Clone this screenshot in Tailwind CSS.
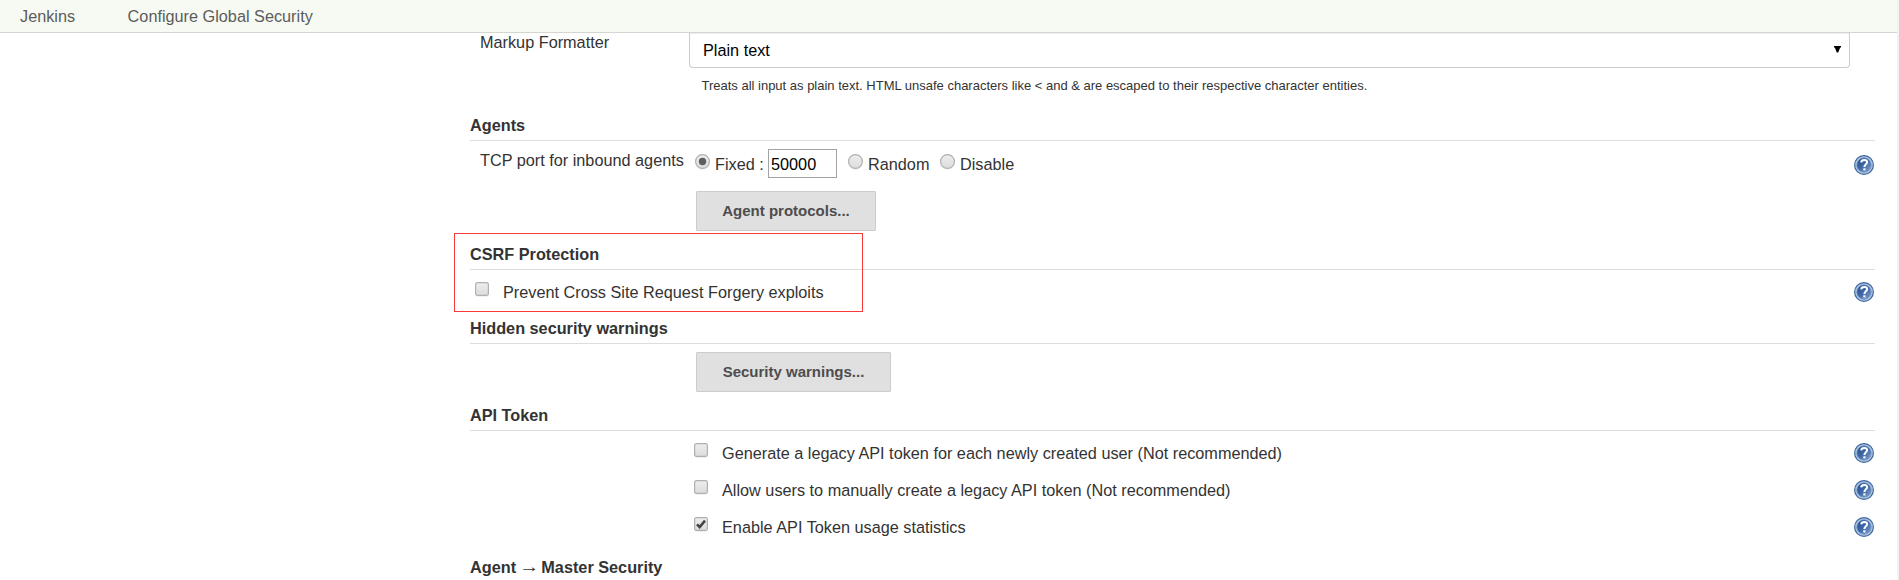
<!DOCTYPE html>
<html lang="en">
<head>
<meta charset="utf-8">
<title>Configure Global Security [Jenkins]</title>
<script src="https://cdn.jsdelivr.net/npm/@tailwindcss/browser@4"></script>
</head>
<body class="flex h-[580px] overflow-hidden bg-white font-['Liberation_Sans',Arial,sans-serif] text-[16.25px] leading-[18px] text-[#333]">
<svg class="absolute h-0 w-0">
  <defs>
    <linearGradient id="disc" x1="0" y1="0" x2="1" y2="1"><stop offset="0" stop-color="#1f4a8c"/><stop offset=".5" stop-color="#3f69a8"/><stop offset="1" stop-color="#86a6d0"/></linearGradient>
    <linearGradient id="ctl" x1="0" y1="0" x2="0" y2="1"><stop offset="0" stop-color="#eee"/><stop offset="1" stop-color="#dcdcdc"/></linearGradient>
    <symbol id="help" viewBox="0 0 20 20">
      <circle cx="10" cy="10" r="9.4" fill="#b4c7e0" stroke="#3f67a3" stroke-width="1.2"/>
      <circle cx="10" cy="10" r="7.2" fill="url(#disc)" stroke="#7494c4" stroke-width=".8"/>
      <path d="M7.2 7.3C7.4 5.6 8.6 4.9 10.2 4.9c1.700 0 2.900.9 2.900 2.300 0 2-2.700 2.200-2.700 4.700" fill="none" stroke="#fff" stroke-width="2"/>
      <rect x="9.300" y="13.300" width="2.200" height="2.200" fill="#fff"/>
    </symbol>
    <symbol id="box" viewBox="0 0 14 15">
      <rect x=".5" y="1.300" width="13" height="13" rx="2" fill="none" stroke="#eee"/>
      <rect x=".6" y=".6" width="12.800" height="12.800" rx="1.800" fill="url(#ctl)" stroke="#b0b0b0" stroke-width="1.200"/>
    </symbol>
    <symbol id="radio" viewBox="0 0 15 16">
      <circle cx="7.500" cy="8.300" r="7" fill="none" stroke="#eee"/>
      <circle cx="7.500" cy="7.500" r="6.900" fill="url(#ctl)" stroke="#b0b0b0" stroke-width="1.200"/>
    </symbol>
  </defs>
</svg>
<div class="flex w-[1897px] flex-col">
  <header class="flex h-[33px] shrink-0 gap-[52.5px] border-b border-[#d3d7cf] bg-[#f6faf2] pt-[7px] pl-5 text-[#5c5c5c]">
    <span>Jenkins</span><span>Configure Global Security</span>
  </header>
  <main class="relative flex w-[1875px] flex-col pl-[470px]">
    <div class="flex h-[83px] pl-2.5">
      <div class="w-[209px]">Markup Formatter</div>
      <div class="w-[1161px]">
        <div class="flex h-[35px] justify-between rounded-b-[4px] border border-t-0 border-[#ccc] pt-2 pr-2 pl-[13px] text-black shadow-[inset_0_1px_1px_rgba(0,0,0,0.075)]">
          <span>Plain text</span>
          <svg class="mt-[5px] h-[7px] w-[7px]" viewBox="0 0 7 7"><path d="M0 0h7v1.500H6.200L4.200 6.500H2.800L.8 1.500H0z" fill="#000"/></svg>
        </div>
        <p class="pt-2 pl-[12.5px] text-[13px] leading-5 tracking-[-0.005px]">Treats all input as plain text. HTML unsafe characters like &lt; and &amp; are escaped to their respective character entities.</p>
      </div>
    </div>

    <h2 class="h-[25px] border-b border-[#ddd] font-bold">Agents</h2>
    <div class="flex h-[104px] pl-2.5">
      <div class="w-[215px] pt-2.5 whitespace-nowrap">TCP port for inbound agents</div>
      <div class="flex flex-1 flex-col">
        <div class="flex h-[50px] pt-2">
          <svg class="mt-[5px] h-4 w-[15px]"><use href="#radio"/><circle cx="7.500" cy="7.500" r="3.700" fill="#5e5e5e"/></svg>
          <span class="w-[58px] pt-1.5 pl-[5px] whitespace-nowrap">Fixed :</span>
          <span class="h-[29px] w-[69px] border border-[#a3a3a3] pt-[5px] pl-0.5 text-black">50000</span>
          <svg class="mt-[5px] ml-[11px] h-4 w-[15px]"><use href="#radio"/></svg>
          <span class="w-[77px] pt-1.5 pl-[5px]">Random</span>
          <svg class="mt-[5px] h-4 w-[15px]"><use href="#radio"/></svg>
          <span class="pt-1.5 pl-[5px]">Disable</span>
        </div>
        <div class="ml-px flex h-10 w-[180px] items-center justify-center rounded-[1px] border border-[#ccc] bg-[#e0e0e0] text-[15px] font-bold text-[#4d4d4d]">Agent protocols...</div>
      </div>
      <svg class="mt-3.5 mr-px h-5 w-5"><use href="#help"/></svg>
    </div>

    <h2 class="h-[25px] border-b border-[#ddd] font-bold">CSRF Protection</h2>
    <div class="flex h-[49px] pt-3 pl-[5px]">
      <svg class="h-[15px] w-3.5"><use href="#box"/></svg>
      <span class="flex-1 pt-px pl-3.5">Prevent Cross Site Request Forgery exploits</span>
      <svg class="mr-px h-5 w-5"><use href="#help"/></svg>
    </div>

    <h2 class="h-[25px] border-b border-[#ddd] font-bold">Hidden security warnings</h2>
    <div class="h-[62px] pt-2 pl-[226px]">
      <div class="flex h-10 w-[195px] items-center justify-center rounded-[1px] border border-[#ccc] bg-[#e0e0e0] text-[15px] font-bold text-[#4d4d4d]">Security warnings...</div>
    </div>

    <h2 class="h-[25px] border-b border-[#ddd] font-bold">API Token</h2>
    <div class="flex h-[127px] flex-col pt-3 pl-56">
      <div class="flex h-[37px]">
        <svg class="h-[15px] w-3.5"><use href="#box"/></svg>
        <span class="flex-1 pt-px pl-3.5">Generate a legacy API token for each newly created user (Not recommended)</span>
        <svg class="mr-px h-5 w-5"><use href="#help"/></svg>
      </div>
      <div class="flex h-[37px]">
        <svg class="h-[15px] w-3.5"><use href="#box"/></svg>
        <span class="flex-1 pt-px pl-3.5">Allow users to manually create a legacy API token (Not recommended)</span>
        <svg class="mr-px h-5 w-5"><use href="#help"/></svg>
      </div>
      <div class="flex h-[37px]">
        <svg class="h-[15px] w-3.5"><use href="#box"/><path d="M3 7.300 5.700 10 11 3.600" fill="none" stroke="#444" stroke-width="2.600"/></svg>
        <span class="flex-1 pt-px pl-3.5">Enable API Token usage statistics</span>
        <svg class="mr-px h-5 w-5"><use href="#help"/></svg>
      </div>
    </div>

    <h2 class="font-bold whitespace-nowrap">Agent <span class="inline-block -translate-y-px scale-x-[1.25] font-['Liberation_Serif',serif] font-normal">→</span> Master Security</h2>

    <!-- highlight around the CSRF section -->
    <div class="absolute top-[200px] left-[454px] h-[79px] w-[409px] border border-[#f93a3a]"></div>
  </main>
</div>
<div class="w-0.5 bg-[#f1f1f1]"></div>
</body>
</html>
